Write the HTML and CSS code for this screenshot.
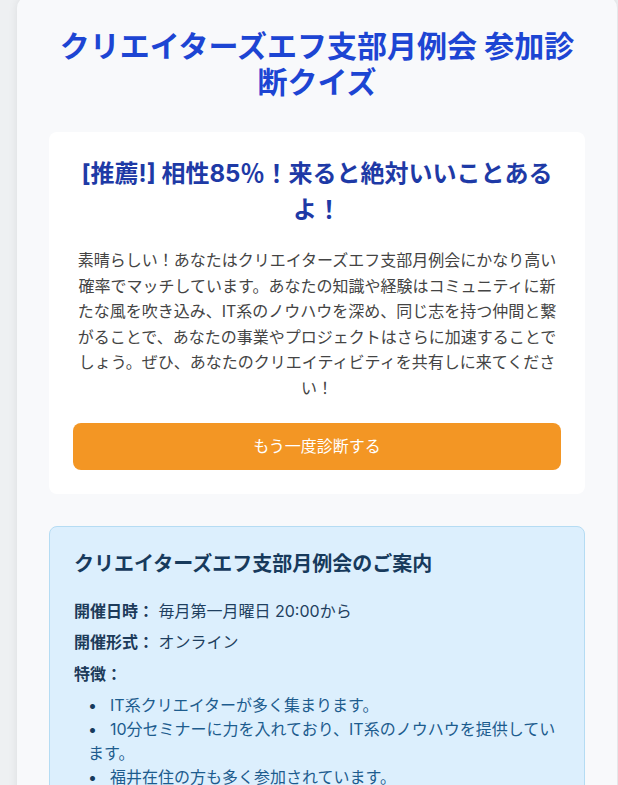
FILE: index.html
```html
<!DOCTYPE html>
<html lang="ja">
    <head>
        <meta charset="UTF-8">
        <meta name="viewport" content="width=device-width, initial-scale=1.0">
        <title>クリエイターズエフ支部月例会 参加診断クイズ</title>
        <link rel="stylesheet" href="styles.css">
    </head>
    <body>
        <div class="container">
            <h1>クリエイターズエフ支部月例会 参加診断クイズ</h1>

            <!-- 診断結果 -->
            <div class="result">
                <h2>[推薦!] 相性85％！来ると絶対いいことあるよ！</h2>
                <p>素晴らしい！あなたはクリエイターズエフ支部月例会にかなり高い確率でマッチしています。あなたの知識や経験はコミュニティに新たな風を吹き込み、IT系のノウハウを深め、同じ志を持つ仲間と繋がることで、あなたの事業やプロジェクトはさらに加速することでしょう。ぜひ、あなたのクリエイティビティを共有しに来てください！</p>
                <button class="retry-btn">もう一度診断する</button>
            </div>

            <!-- 月例会のご案内 -->
            <div class="info">
                <h3>クリエイターズエフ支部月例会のご案内</h3>
                <p><strong>開催日時：</strong> 毎月第一月曜日 20:00から</p>
                <p><strong>開催形式：</strong> オンライン</p>
                <p><strong>特徴：</strong></p>
                <ul>
                    <li>IT系クリエイターが多く集まります。</li>
                    <li>10分セミナーに力を入れており、IT系のノウハウを提供しています。</li>
                    <li>福井在住の方も多く参加されています。</li>
                </ul>
            </div>
        </div>
    </body>
</html>
```

FILE: styles.css
```css
body { font-family: "Inter", "Noto Sans CJK JP", sans-serif; background: #eef0f2; margin: 0; color: #444; }
.container { width: 600px; box-sizing: border-box; margin: -4px 0 0 17px; padding: 32px; background: #f8f9fb; border-radius: 12px; box-shadow: 0 0 10px rgba(0, 0, 0, 0.08); min-height: 900px; }
h1 { color: #1d45d3; font-size: 30px; line-height: 36px; text-align: center; margin: 0 0 32px; font-weight: bold; }

.result { background: #ffffff; border-radius: 8px; padding: 24px; margin-bottom: 32px; text-align: center; }
.result h2 { color: #1e3aa6; font-size: 24px; line-height: 36px; margin: 0 0 20px; }
.result p { font-size: 16px; line-height: 25.6px; color: #444; margin: 0 0 21px; }
.retry-btn { display: block; width: 100%; background: #f39624; color: #ffffff; font-family: inherit; font-size: 16px; line-height: 23px; padding: 12px; border: none; border-radius: 8px; cursor: pointer; }

.info { background: #dceffd; border: 1px solid #b5dcf3; border-radius: 8px; padding: 24px; color: #1f3f5f; }
.info h3 { font-size: 20px; line-height: 26px; margin: 0 0 22px; color: #173a5c; }
.info p { font-size: 16px; line-height: 25.6px; margin: 0 0 6px; }
.info strong { color: #1d3b5a; }
.info ul { list-style: none; padding: 0 0 0 14px; margin: 4px 0 0; }
.info li { font-size: 16px; line-height: 24px; color: #1d5c8e; }
.info li::before { content: "•"; display: inline-block; width: 22px; color: #173a5c; }
```
